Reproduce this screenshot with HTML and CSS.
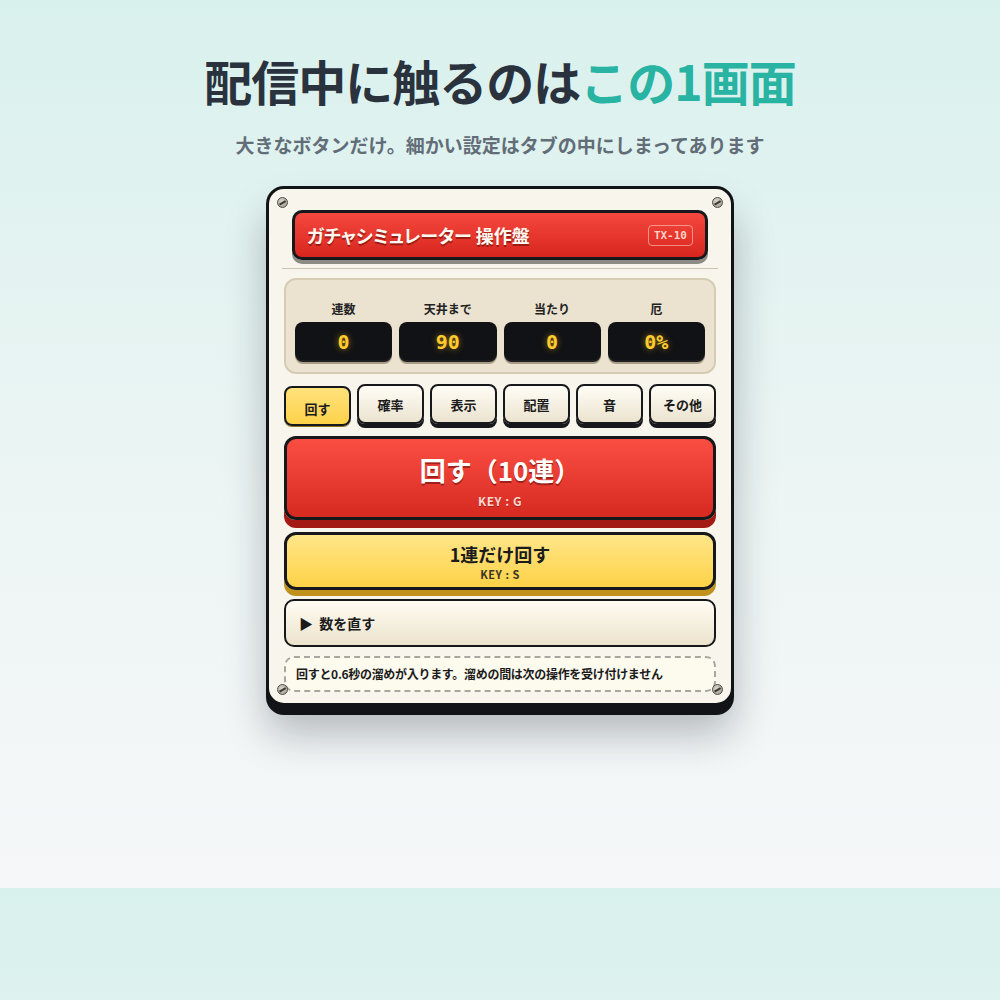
FILE: index.html
```html
<!DOCTYPE html>
<html lang="ja">
<head>
  <meta charset="UTF-8" />
  <meta name="viewport" content="width=device-width, initial-scale=1.0"/>
  <title>ガチャシミュレーター 操作盤</title>
  <link rel="stylesheet" href="styles.css">
</head>
<body>
  <header class="intro">
    <h1>配信中に触るのは<span class="accent">この1画面</span></h1>
    <p>大きなボタンだけ。細かい設定はタブの中にしまってあります</p>
  </header>

  <div class="panel">
    <!-- ネジ4つ -->
    <span class="screw tl"></span>
    <span class="screw tr"></span>
    <span class="screw bl"></span>
    <span class="screw br"></span>

    <div class="panel-head">
      <div class="nameplate">
        <span class="name">ガチャシミュレーター 操作盤</span>
        <span class="model">TX-10</span>
      </div>
    </div>

    <div class="meters">
      <div class="meter"><div class="label">連数</div><div class="lcd">0</div></div>
      <div class="meter"><div class="label">天井まで</div><div class="lcd">90</div></div>
      <div class="meter"><div class="label">当たり</div><div class="lcd">0</div></div>
      <div class="meter"><div class="label">厄</div><div class="lcd">0%</div></div>
    </div>

    <div class="tabs">
      <button class="tab active">回す</button>
      <button class="tab">確率</button>
      <button class="tab">表示</button>
      <button class="tab">配置</button>
      <button class="tab">音</button>
      <button class="tab">その他</button>
    </div>

    <button class="big-btn red">
      <span class="main">回す（10連）</span>
      <span class="key">KEY : G</span>
    </button>

    <button class="big-btn yellow">
      <span class="main">1連だけ回す</span>
      <span class="key">KEY : S</span>
    </button>

    <div class="fold">▶&nbsp; 数を直す</div>

    <div class="note">回すと0.6秒の溜めが入ります。溜めの間は次の操作を受け付けません</div>
  </div>
</body>
</html>
```

FILE: styles.css
```css
* {
  margin: 0;
  padding: 0;
  box-sizing: border-box;
}

body {
  min-height: 888px;
  padding-top: 50px;
  background: linear-gradient(180deg, #d9f1ed 0%, #eef5f5 60%, #f5f7f9 100%);
  font-family: "Noto Sans CJK JP", "Noto Sans", sans-serif;
  color: #1b1b1b;
}

.intro {
  text-align: center;
}

.intro h1 {
  font-size: 48px;
  font-weight: 700;
  line-height: 60px;
  letter-spacing: -1px;
  color: #2a333d;
}

.intro h1 .accent {
  color: #29b3a3;
}

.intro p {
  margin-top: 21px;
  font-size: 19px;
  font-weight: 700;
  line-height: 28px;
  color: #626d78;
}

.panel {
  position: relative;
  width: 468px;
  margin: 27px auto 0;
  padding: 21px 15px 11px;
  background: #f8f5ec;
  border: 3px solid #121316;
  border-radius: 18px;
  box-shadow: 0 9px 0 #121316, 0 28px 40px rgba(20, 30, 35, 0.28);
}

.screw {
  position: absolute;
  width: 11px;
  height: 11px;
  border-radius: 50%;
  background: radial-gradient(circle at 40% 35%, #d8d4c8, #9a968b);
  border: 1px solid #4d4a44;
}

.screw::after {
  content: "";
  position: absolute;
  left: 1px;
  top: 4px;
  width: 7px;
  height: 1.6px;
  background: #3b3935;
  transform: rotate(-30deg);
}

.screw.tl { left: 8px; top: 8px; }
.screw.tr { right: 8px; top: 8px; }
.screw.bl { left: 8px; bottom: 8px; }
.screw.br { right: 8px; bottom: 8px; }

.panel-head {
  margin: 0 -2px 9px;
  padding: 0 10px 8px;
  border-bottom: 1px solid #c9c4b6;
}

.nameplate {
  display: flex;
  align-items: center;
  justify-content: space-between;
  height: 50px;
  padding: 0 12px;
  background: linear-gradient(180deg, #f5483e 0%, #d8261e 100%);
  border: 3px solid #17181b;
  border-radius: 10px;
  box-shadow: 0 4px 0 #8d8b86;
}

.nameplate .name {
  font-size: 18px;
  font-weight: 700;
  font-feature-settings: "palt";
  color: #fff8f0;
  text-shadow: 0 2px 0 rgba(90, 10, 5, 0.55);
}

.nameplate .model {
  padding: 3px 5px;
  font-family: "DejaVu Sans Mono", monospace;
  font-size: 11px;
  font-weight: 700;
  color: #ffd2c8;
  border: 1px solid rgba(255, 220, 210, 0.55);
  border-radius: 4px;
}

.meters {
  display: grid;
  grid-template-columns: repeat(4, 1fr);
  gap: 7px;
  padding: 20px 9px 10px;
  background: #ebe3cf;
  border: 2px solid #d6ccb3;
  border-radius: 12px;
}

.meter {
  display: flex;
  flex-direction: column;
  align-items: center;
  gap: 4px;
}

.meter .label {
  font-size: 12px;
  font-weight: 700;
  line-height: 18px;
  color: #222;
}

.lcd {
  width: 100%;
  height: 40px;
  display: flex;
  align-items: center;
  justify-content: center;
  background: #111215;
  border-radius: 8px;
  box-shadow: inset 0 -2px 0 rgba(255, 255, 255, 0.06), 0 2px 0 #a79d86;
  font-family: "DejaVu Sans Mono", monospace;
  font-size: 20px;
  font-weight: 700;
  color: #ffcb2e;
  text-shadow: 0 0 6px rgba(255, 190, 30, 0.55);
}

.tabs {
  display: grid;
  grid-template-columns: repeat(6, 1fr);
  gap: 6px;
  margin-top: 10px;
}

.tab {
  height: 40px;
  font-family: inherit;
  font-size: 13px;
  font-weight: 700;
  color: #1b1b1b;
  background: linear-gradient(180deg, #fffdf6 0%, #ebe3cf 100%);
  border: 2px solid #17181b;
  border-radius: 8px;
  box-shadow: 0 4px 0 #17181b;
}

.tab.active {
  margin-top: 2px;
  background: linear-gradient(180deg, #ffe27c 0%, #fdd24a 100%);
  box-shadow: 0 1px 0 #8d7420;
  padding-top: 4px;
}

.big-btn {
  width: 100%;
  display: flex;
  flex-direction: column;
  align-items: center;
  font-family: inherit;
  border: 3px solid #17181b;
  border-radius: 12px;
}

.big-btn .main {
  font-weight: 700;
}

.big-btn .key {
  font-weight: 700;
  letter-spacing: 0.5px;
}

.big-btn.red {
  height: 84px;
  margin-top: 10px;
  padding-top: 13px;
  background: linear-gradient(180deg, #fb4e43 0%, #d62a21 100%);
  box-shadow: 0 8px 0 #a31a15;
  color: #fff;
}

.big-btn.red .main {
  font-size: 26px;
  line-height: 36px;
  text-shadow: 0 2px 0 rgba(110, 15, 10, 0.6);
}

.big-btn.red .key {
  margin-top: 4px;
  font-size: 12px;
  color: #ffd9d2;
  text-shadow: 0 1px 0 rgba(110, 15, 10, 0.5);
}

.big-btn.yellow {
  height: 58px;
  margin-top: 12px;
  padding-top: 6px;
  background: linear-gradient(180deg, #ffe68a 0%, #fdd247 100%);
  box-shadow: 0 6px 0 #c0921c;
  color: #1b1b1b;
}

.big-btn.yellow .main {
  font-size: 18px;
  line-height: 26px;
}

.big-btn.yellow .key {
  font-size: 11px;
  line-height: 14px;
  color: #3b3523;
}

.fold {
  height: 48px;
  margin-top: 9px;
  padding: 0 13px;
  display: flex;
  align-items: center;
  font-size: 14px;
  font-weight: 700;
  color: #1b1b1b;
  background: linear-gradient(180deg, #fffcf2 0%, #ece3cd 100%);
  border: 2px solid #17181b;
  border-radius: 10px;
}

.note {
  margin-top: 9px;
  padding: 7px 10px;
  font-size: 12px;
  font-weight: 700;
  letter-spacing: -0.3px;
  line-height: 18px;
  color: #1b1b1b;
  background: #fdfaee;
  border: 2px dashed #a9a6a0;
  border-radius: 10px;
}
```
